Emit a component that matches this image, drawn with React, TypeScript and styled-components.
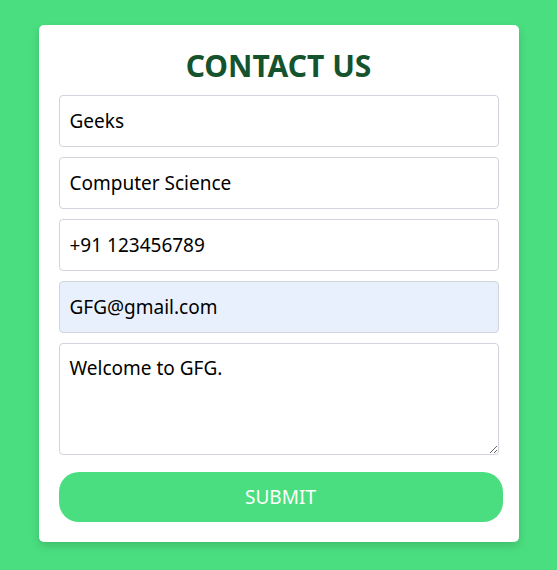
import styled, { createGlobalStyle } from "styled-components";

const GlobalStyle = createGlobalStyle`
  html, body {
    margin: 0;
    padding: 0;
    background: #4ade80;
    font-family: "Segoe UI", "Noto Sans", sans-serif;
  }
`;

const Page = styled.div`
  min-height: 570px;
  display: flex;
  justify-content: center;
  align-items: flex-start;
  padding-top: 25px;
  box-sizing: border-box;
`;

const Card = styled.form`
  width: 480px;
  box-sizing: border-box;
  background: #ffffff;
  border-radius: 5px;
  padding: 20px;
  box-shadow: 0 4px 10px rgba(0, 0, 0, 0.15);
  display: flex;
  flex-direction: column;
  gap: 10px;
`;

const Title = styled.h2`
  margin: 0;
  height: 40px;
  line-height: 42px;
  text-align: center;
  font-size: 30px;
  font-weight: 700;
  color: #14532d;
`;

const Field = styled.input<{ $filled?: boolean }>`
  width: 440px;
  height: 52px;
  box-sizing: border-box;
  border: 1px solid #d1d5db;
  border-radius: 4px;
  padding: 0 10px;
  font-family: inherit;
  font-size: 19px;
  color: #000;
  background: ${(p) => (p.$filled ? "#e8f0fe" : "#ffffff")};
  outline: none;
`;

const Message = styled.textarea`
  width: 440px;
  height: 112px;
  box-sizing: border-box;
  border: 1px solid #d1d5db;
  border-radius: 4px;
  padding: 11px 10px;
  font-family: inherit;
  font-size: 19px;
  color: #000;
  outline: none;
`;

const Submit = styled.button`
  margin-top: 7px;
  width: 444px;
  height: 50px;
  border: none;
  border-radius: 20px;
  background: #4ade80;
  color: #ffffff;
  font-family: inherit;
  font-size: 19px;
  text-transform: uppercase;
  cursor: pointer;
`;

export default function App() {
  return (
    <>
      <GlobalStyle />
      <Page>
        <Card onSubmit={(e) => e.preventDefault()}>
          <Title>CONTACT US</Title>
          <Field defaultValue="Geeks" />
          <Field defaultValue="Computer Science" />
          <Field defaultValue="+91 123456789" />
          <Field $filled defaultValue="GFG@gmail.com" />
          <Message defaultValue="Welcome to GFG." />
          <Submit type="submit">Submit</Submit>
        </Card>
      </Page>
    </>
  );
}
